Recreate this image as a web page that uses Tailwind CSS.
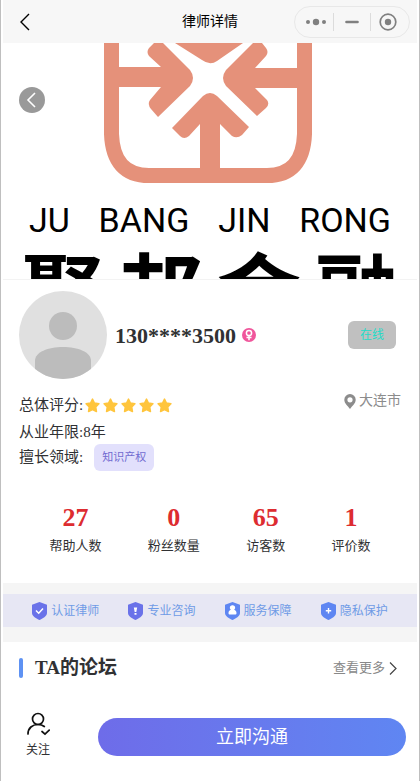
<!DOCTYPE html>
<html lang="zh-CN">
<head>
  <meta charset="UTF-8">
  <meta name="viewport" content="width=device-width, initial-scale=1.0">
  <title>律师详情</title>
  <script src="https://cdn.jsdelivr.net/npm/@tailwindcss/browser@4"></script>
</head>
<body class="bg-white text-[#303133] font-['Liberation_Serif','Noto_Sans_CJK_SC',serif]">
  <div class="min-h-screen border-x border-[#bfbfbf] px-0.5 flex flex-col">

    <!-- Header -->
    <header class="h-[43px] bg-[#f7f7f7] grid grid-cols-[1fr_auto_1fr] items-center text-black">
      <button type="button" aria-label="返回" class="justify-self-start ml-4 p-0">
        <svg class="w-3 h-5" viewBox="0 0 12 20" fill="none" stroke="currentColor" stroke-width="1.4"><path d="M10 2 2 10l8 8"/></svg>
      </button>
      <h1 class="text-sm">律师详情</h1>
      <div class="justify-self-end mr-[7px] w-[116px] h-8 rounded-full border border-[#e8e8e8] flex items-center text-[#808080]">
        <button type="button" aria-label="更多" class="flex-1 flex justify-center pl-1">
          <svg class="w-5 h-4" viewBox="0 0 20 16" fill="currentColor"><circle cx="2" cy="8" r="2"/><circle cx="10" cy="8" r="3.2"/><circle cx="18" cy="8" r="2"/></svg>
        </button>
        <span class="w-px h-[18px] bg-[#dcdcdc]"></span>
        <button type="button" aria-label="最小化" class="w-9 flex justify-center">
          <svg class="w-4 h-4" viewBox="0 0 16 16" stroke="currentColor" stroke-width="2.6" stroke-linecap="round"><path d="M2.5 8h11"/></svg>
        </button>
        <span class="w-px h-[18px] bg-[#dcdcdc]"></span>
        <button type="button" aria-label="关闭" class="flex-1 flex justify-center pr-1">
          <svg class="w-[18px] h-[18px]" viewBox="0 0 18 18"><circle cx="9" cy="9" r="7.8" fill="none" stroke="currentColor" stroke-width="1.7"/><circle cx="9" cy="9" r="3.2" fill="currentColor"/></svg>
        </button>
      </div>
    </header>

    <!-- Banner -->
    <section class="relative h-[237px] overflow-hidden border-b border-[#f3f3f3] text-black">
      <svg class="block w-full" viewBox="3 43 414 141" fill="#e5917a">
        <path d="M111.5 40V134Q113 175.500 149 175.500H267Q303 175.500 304.500 134V40" fill="none" stroke="#e5917a" stroke-width="15"/>
        <path d="M119 67H161L149 56Q146 52 149 48L154 43H163L190 70Q196 78 190 86L158 117L151 109Q147 104 150 100L161 87H119Z"/>
        <path d="M297 68H255L266 56Q269 52 266 48L262 43H253L226 70Q220 78 226 86L257 116L266 108Q270 104 267 100L255 88H297Z"/>
        <path d="M175 43 202 60Q210 66 217 61L243 43Z"/>
        <path d="M200 169V124L189 136Q184 140 180 136L172 128L203 96Q210 90 217 96L249 127L242 135Q237 139 232 136L220 124V169Z"/>
      </svg>
      <p class="mt-4 px-[26px] flex justify-between text-[34px] leading-[40px] font-[Roboto,sans-serif]"><span>JU</span><span>BANG</span><span>JIN</span><span>RONG</span></p>
      <p class="px-[18px] flex justify-between text-[84px] leading-[112px] font-bold"><span>聚</span><span>邦</span><span>金</span><span>融</span></p>
      <button type="button" aria-label="后退" class="absolute left-4 top-11 size-[26px] rounded-full bg-[#999] text-white flex items-center justify-center">
        <svg class="w-3 h-4" viewBox="0 0 12 16" fill="none" stroke="currentColor" stroke-width="1.6"><path d="M9 1 2 8l7 7"/></svg>
      </button>
    </section>

    <!-- Profile -->
    <section class="px-4 pt-[11px]">
      <div class="flex items-center">
        <svg class="size-[88px] rounded-full bg-[#e0e0e0] mr-2" viewBox="0 0 88 88" fill="#bcbcbc"><circle cx="44" cy="35" r="14"/><path d="M16 88V70C16 61 29 56 44 56s28 5 28 14v18Z"/></svg>
        <h2 class="text-[22px] font-bold">130****3500</h2>
        <svg class="size-[14px] ml-1.5" viewBox="0 0 14 14"><circle cx="7" cy="7" r="7" fill="#f0559b"/><g fill="none" stroke="#fff" stroke-width="1.5"><circle cx="7" cy="5" r="2.6"/><path d="M7 7.600v4.600M4.500 9.500h5"/></g></svg>
        <button type="button" class="ml-auto mr-[5px] w-12 h-7 rounded-md bg-[#c0c0c0] text-xs text-[#22dcc8]">在线</button>
      </div>

      <div class="flex justify-between pt-[13px] text-[15px]">
        <div>
          <div class="h-[26px] flex items-center">总体评分:
            <div id="stars" class="flex gap-[3px] ml-0.5 text-[#ffc53d]"></div>
          </div>
          <p class="h-[26px] leading-[28px]">从业年限:8年</p>
          <div class="h-[26px] flex items-center">擅长领域:
            <span class="ml-[11px] px-2 rounded-md bg-[#e2e0fc] text-[#716bd0] text-[11px] leading-[27px]">知识产权</span>
          </div>
        </div>
        <div class="h-[18px] flex items-center gap-[3px] text-sm text-[#8c8c8c]">
          <svg class="w-3 h-[15px]" viewBox="0 0 12 15" fill="#8c8c8c" fill-rule="evenodd"><path d="M6 0a5.700 5.700 0 0 0-5.700 5.700C.3 9.500 4 12 6 15c2-3 5.700-5.500 5.700-9.300A5.700 5.700 0 0 0 6 0Zm0 3.200a2.600 2.600 0 1 1 0 5.200 2.600 2.600 0 0 1 0-5.200Z"/></svg>
          大连市
        </div>
      </div>
    </section>

    <!-- Stats -->
    <dl class="flex justify-evenly pt-[30px] pb-[27px] text-center text-[13px]">
      <div class="flex flex-col-reverse"><dt class="leading-5">帮助人数</dt><dd class="text-[26px] leading-9 font-bold text-[#dd2c30]">27</dd></div>
      <div class="flex flex-col-reverse"><dt class="leading-5">粉丝数量</dt><dd class="text-[26px] leading-9 font-bold text-[#dd2c30]">0</dd></div>
      <div class="flex flex-col-reverse"><dt class="leading-5">访客数</dt><dd class="text-[26px] leading-9 font-bold text-[#dd2c30]">65</dd></div>
      <div class="flex flex-col-reverse"><dt class="leading-5">评价数</dt><dd class="text-[26px] leading-9 font-bold text-[#dd2c30]">1</dd></div>
    </dl>

    <!-- Guarantees -->
    <section class="bg-[#f5f5f5] pt-[11px] pb-[15px]">
      <ul class="h-[33px] bg-[#e7e7f4] flex justify-evenly items-center text-xs text-[#6f9be6]">
        <li class="flex items-center gap-1">
          <svg class="w-[15px] h-[18px]" viewBox="0 0 15 18"><path d="M7.500 0 15 2.700V11c0 3.500-4.500 5.500-7.500 7C4.500 16.500 0 14.500 0 11V2.700Z" fill="#6a72e9"/><path d="m4 8.500 2.700 2.700L11 6.500" fill="none" stroke="#fff" stroke-width="1.5"/></svg>
          认证律师
        </li>
        <li class="flex items-center gap-1">
          <svg class="w-[15px] h-[18px]" viewBox="0 0 15 18"><path d="M7.500 0 15 2.700V11c0 3.500-4.500 5.500-7.500 7C4.500 16.500 0 14.500 0 11V2.700Z" fill="#6a72e9"/><path d="M5.800 5.500h3.400L8.300 10H6.700ZM6.500 11h2v1.800h-2Z" fill="#fff"/></svg>
          专业咨询
        </li>
        <li class="flex items-center gap-1">
          <svg class="w-[15px] h-[18px]" viewBox="0 0 15 18"><path d="M7.500 0 15 2.700V11c0 3.500-4.500 5.500-7.500 7C4.500 16.500 0 14.500 0 11V2.700Z" fill="#5e86f2"/><path d="M7.500 3.200a2.500 2.500 0 0 1 1.700 4.500c1.300.5 2.300 1.500 2.300 3.300 0 1-.5 1.500-1.500 1.500H5c-1 0-1.500-.5-1.500-1.500 0-1.800 1-2.800 2.300-3.300a2.500 2.500 0 0 1 1.700-4.500Z" fill="#fff"/></svg>
          服务保障
        </li>
        <li class="flex items-center gap-1">
          <svg class="w-[15px] h-[18px]" viewBox="0 0 15 18"><path d="M7.500 0 15 2.700V11c0 3.500-4.500 5.500-7.500 7C4.500 16.500 0 14.500 0 11V2.700Z" fill="#5e86f2"/><path d="M7.500 6v5.500M4.800 8.800h5.400" stroke="#fff" stroke-width="1.4"/></svg>
          隐私保护
        </li>
      </ul>
    </section>

    <!-- Forum -->
    <section class="h-[52px] px-4 flex items-center">
      <span class="w-1 h-5 rounded-sm bg-[#5e92f3] mr-3"></span>
      <h2 class="text-[19px] leading-6 font-bold">TA的论坛</h2>
      <a href="#" class="ml-auto mr-1 flex items-center gap-1 text-[13px] text-[#888]">查看更多
        <svg class="w-2 h-[13px]" viewBox="0 0 8 13" fill="none" stroke="#444" stroke-width="1.2"><path d="m1 .5 6 6-6 6"/></svg>
      </a>
    </section>

    <!-- Bottom bar -->
    <footer class="pt-[18px] pl-[23px] pr-[11px] flex items-center">
      <button type="button" class="w-6 mr-12 flex flex-col items-center gap-1 text-xs leading-5">
        <svg class="w-6 h-6" viewBox="0 0 24 24" fill="none" stroke="#111" stroke-width="1.7" stroke-linecap="round"><circle cx="12" cy="7" r="5.5"/><path d="M2 22C2 16 6.500 12.500 12 12.500c2.500 0 4.500.6 6.300 2M16 19.500l3 2.700 4.200-4"/></svg>
        关注
      </button>
      <button type="button" class="flex-1 h-[38px] mt-0.5 rounded-full bg-linear-to-r from-[#6e6ce9] to-[#5f86f2] text-lg leading-5 text-white">立即沟通</button>
    </footer>
  </div>

  <script>
    const star = '<svg class="size-[15px]" viewBox="0 0 14 14" fill="currentColor" stroke="currentColor" stroke-width="1.4" stroke-linejoin="round"><path d="m7 1 1.800 3.700 4.200.6-3 3 .7 4.300L7 10.700l-3.700 1.900.7-4.300-3-3 4.200-.6Z"/></svg>';
    document.getElementById("stars").innerHTML = star.repeat(5);
  </script>
</body>
</html>
